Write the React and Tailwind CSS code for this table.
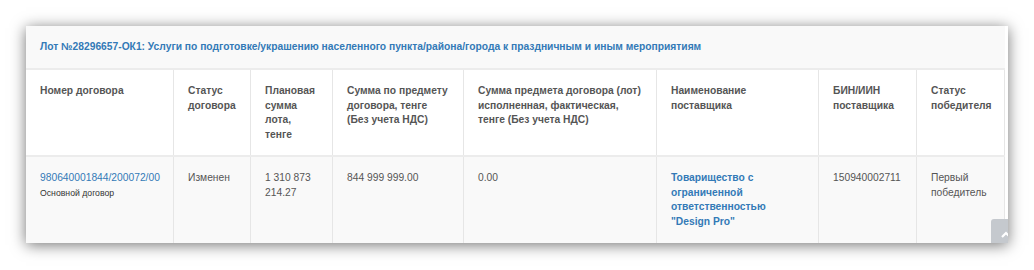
import React from "react";

const cols = "grid grid-cols-[148px_77px_82px_131px_193px_162px_98px_88px]";
const cell = "border-r border-[#e6e6e6] px-[14px] pt-[14px]";

const headers = [
  "Номер договора",
  "Статус договора",
  "Плановая сумма лота, тенге",
  "Сумма по предмету договора, тенге (Без учета НДС)",
  "Сумма предмета договора (лот) исполненная, фактическая, тенге (Без учета НДС)",
  "Наименование поставщика",
  "БИН/ИИН поставщика",
  "Статус победителя",
];

function App() {
  return (
    <div className="min-h-screen bg-white p-[26px] font-['Liberation_Sans',Arial,sans-serif] text-[10.27px] leading-[14.67px] text-[#555]">
      <div className="relative w-[982px] h-[217px] overflow-hidden bg-white shadow-[0_2px_14px_rgba(0,0,0,0.55)]">
        <div className="w-[979px]">
          <div className="h-[44px] bg-[#f9f9f9] border-b-2 border-[#ececec] px-[14px] pt-[14px] font-bold text-[#337ab7]">
            Лот №28296657-ОК1: Услуги по подготовке/украшению населенного пункта/района/города к праздничным и иным мероприятиям
          </div>

          <div className={`${cols} h-[87px] border-b-2 border-[#ececec] font-bold`}>
            {headers.map((h) => (
              <div key={h} className={cell}>
                {h}
              </div>
            ))}
          </div>

          <div className={`${cols} h-[86px] bg-[#f9f9f9]`}>
            <div className={cell}>
              <a className="text-[#337ab7]">980640001844/200072/00</a>
              <div className="text-[8.7px] leading-[13px] text-[#333] mt-[1px]">Основной договор</div>
            </div>
            <div className={cell}>Изменен</div>
            <div className={cell}>1 310 873 214.27</div>
            <div className={cell}>844 999 999.00</div>
            <div className={cell}>0.00</div>
            <div className={`${cell} font-bold text-[#337ab7]`}>
              Товарищество с ограниченной ответственностью "Design Pro"
            </div>
            <div className={cell}>150940002711</div>
            <div className={cell}>Первый победитель</div>
          </div>
        </div>

        {/* scroll-to-top button, cut off by the card edge */}
        <div className="absolute left-[965px] top-[193px] w-[36px] h-[30px] rounded-tl-[3px] bg-[#c5c9ce] flex items-center pl-[10px]">
          <svg width="10" height="7" viewBox="0 0 10 7" fill="none">
            <path d="M1 6 L5 2 L9 6" stroke="white" strokeWidth="2.2" />
          </svg>
        </div>
      </div>
    </div>
  );
}

export default App;
